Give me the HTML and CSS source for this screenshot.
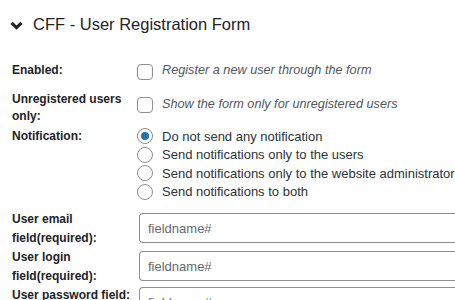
FILE: index.html
```
<!doctype html>
<html>
	<head>
		<title>CFF - User Registration Form</title>
		<link rel="stylesheet" href="styles.css">
	</head>
	<body>
		<div class="postbox">
			<h3 class="hndle">
				<svg class="toggle" width="13" height="9" viewBox="0 0 13 9"><path d="M1.5 1.8 L6.5 6.6 L11.5 1.8" fill="none" stroke="#1d2327" stroke-width="3"/></svg>
				CFF - User Registration Form
			</h3>
			<div class="inside">
				<div class="row row-enabled">
					<div class="label">Enabled:</div>
					<label class="field"><span class="check"></span><i class="description">Register a new user through the form</i></label>
				</div>
				<div class="row row-unreg">
					<div class="label">Unregistered users only:</div>
					<label class="field"><span class="check"></span><i class="description">Show the form only for unregistered users</i></label>
				</div>
				<div class="row row-notify">
					<div class="label">Notification:</div>
					<div class="radios">
						<label class="radio-item"><span class="radio checked"></span>Do not send any notification</label>
						<label class="radio-item"><span class="radio"></span>Send notifications only to the users</label>
						<label class="radio-item"><span class="radio"></span>Send notifications only to the website administrator</label>
						<label class="radio-item"><span class="radio"></span>Send notifications to both</label>
					</div>
				</div>
				<div class="row row-email">
					<div class="label">User email field(required):</div>
					<div class="text-input"><span class="placeholder">fieldname#</span></div>
				</div>
				<div class="row row-login">
					<div class="label">User login field(required):</div>
					<div class="text-input"><span class="placeholder">fieldname#</span></div>
				</div>
				<div class="row row-pass">
					<div class="label">User password field:</div>
					<div class="text-input"><span class="placeholder">fieldname#</span></div>
				</div>
			</div>
		</div>
	</body>
</html>
```
FILE: styles.css
```
body {
	margin: 0;
	background: white;
	font-family: "Liberation Sans", Arial, sans-serif;
	font-size: 13px;
	color: #1d2327;
	overflow: hidden;
}

.postbox {
	width: 455px;
}

.hndle {
	display: flex;
	align-items: center;
	gap: 10px;
	height: 48px;
	margin: 0;
	padding-left: 10px;
	font-size: 16.5px;
	font-weight: normal;
	color: #1d2327;
}

.toggle {
	margin-top: 2px;
}

.inside {
	padding: 13px 0 0 12px;
}

.row {
	display: grid;
	grid-template-columns: 125px 1fr;
}

.label {
	font-size: 12px;
	font-weight: bold;
	line-height: 19px;
}

.field {
	display: flex;
	align-items: flex-start;
	gap: 9px;
}

.description {
	font-style: italic;
	font-size: 12.7px;
	color: #50575e;
	line-height: 19px;
}

.check {
	flex: none;
	box-sizing: border-box;
	width: 16px;
	height: 16px;
	margin-top: 3px;
	border: 1px solid #8c8f94;
	border-radius: 4px;
	background: white;
}

.row-unreg {
	margin-top: 11px;
}

.row-unreg .label {
	line-height: 17px;
}

.row-unreg .check {
	margin-top: 6px;
}

.row-unreg .description {
	margin-top: 4px;
}

.row-notify {
	margin-top: 2px;
}

.radios {
	display: flex;
	flex-direction: column;
}

.radio-item {
	display: flex;
	align-items: center;
	gap: 9px;
	height: 18.5px;
	color: #2c3338;
}

.radio {
	flex: none;
	box-sizing: border-box;
	width: 16px;
	height: 16px;
	border: 1px solid #8c8f94;
	border-radius: 50%;
	background: white;
	display: flex;
	align-items: center;
	justify-content: center;
}

.radio.checked::after {
	content: "";
	width: 8px;
	height: 8px;
	border-radius: 50%;
	background: #2271b1;
}

.row-email {
	margin-top: 9px;
}

.text-input {
	box-sizing: border-box;
	height: 30px;
	margin: 3px 0 0 2px;
	padding-left: 8px;
	border: 1px solid #8c8f94;
	border-right: none;
	border-radius: 4px 0 0 4px;
	display: flex;
	align-items: center;
}

.placeholder {
	color: #646970;
}

.row-pass .text-input {
	margin-top: 1px;
}
```
